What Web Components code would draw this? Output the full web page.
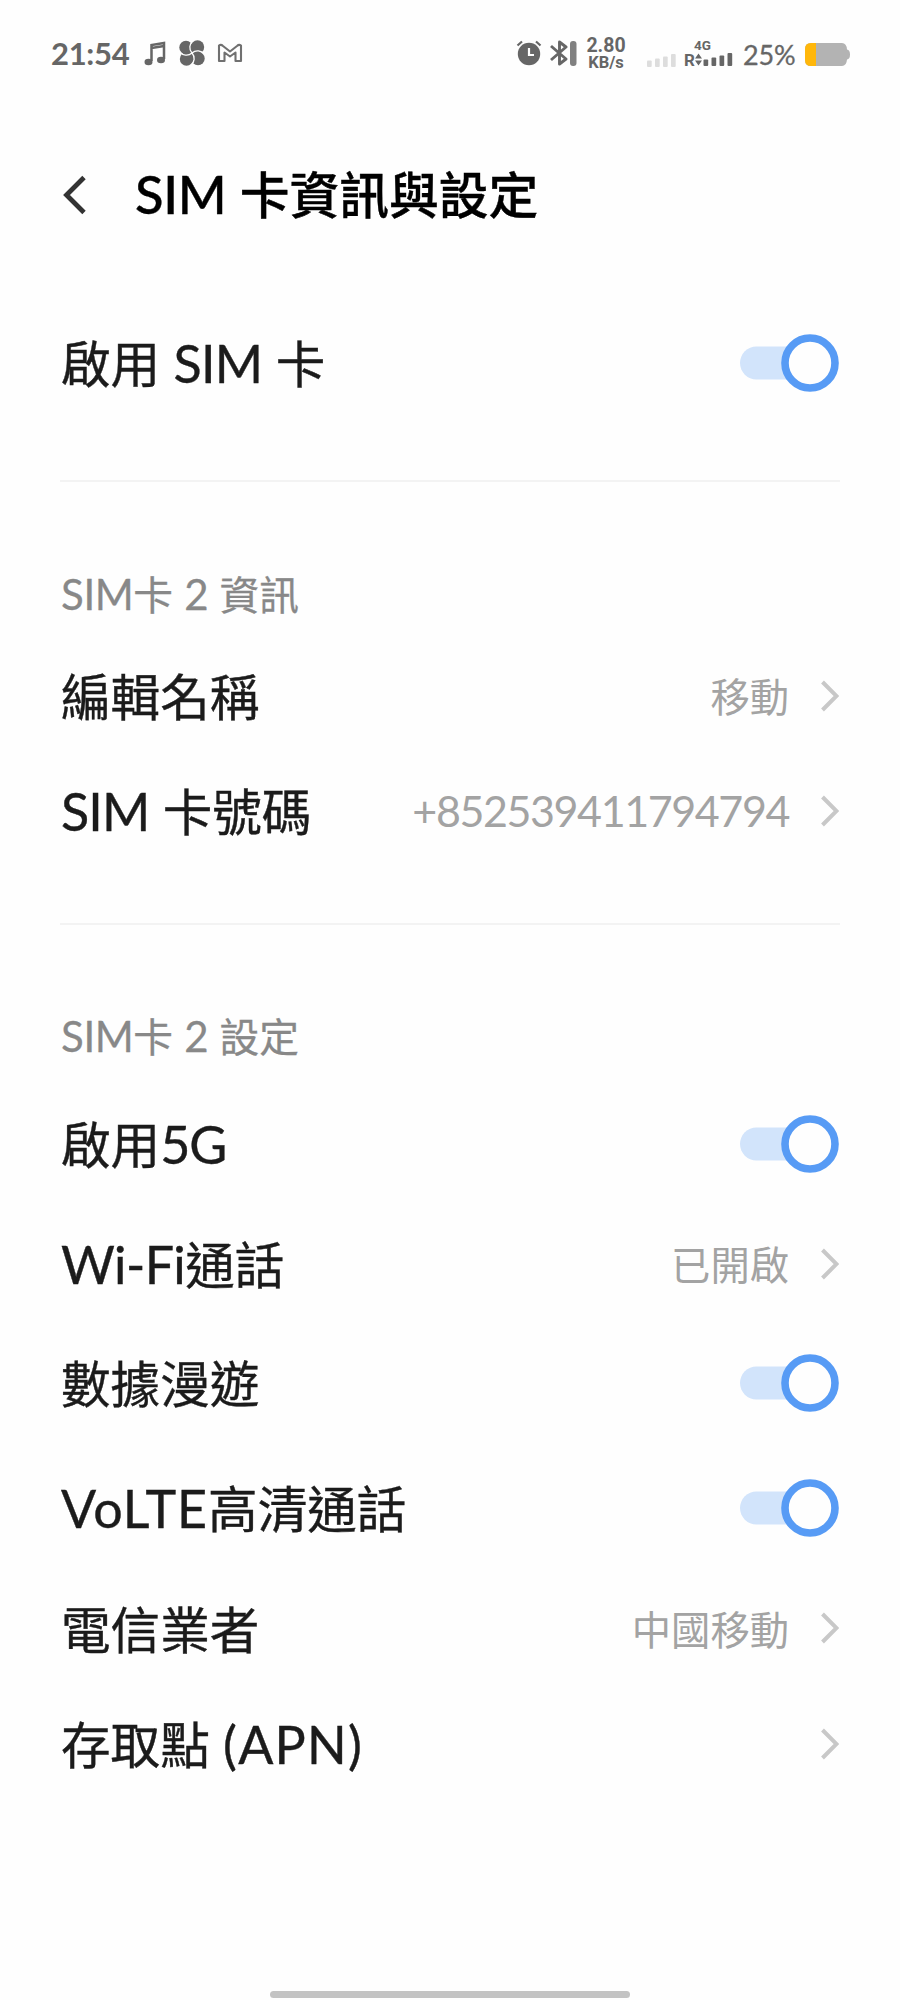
<!DOCTYPE html>
<html lang="zh-Hant"><head><meta charset="utf-8"><title>SIM</title>
<style>
html,body{margin:0;background:#fefefe}
</style></head><body>
<sim-screen></sim-screen>
<script>
const define=(name,html,init)=>customElements.define(name,class extends HTMLElement{
 constructor(){super();this.attachShadow({mode:'open'})}
 connectedCallback(){this.shadowRoot.innerHTML=html;if(init)init(this,this.shadowRoot)}
});
/* Splits Latin and CJK runs so that each script keeps its own size and spacing. */
define('mixed-text',`<style>:host{display:block;white-space:pre;line-height:1;padding-bottom:2px;word-spacing:var(--ws,2.200px);font-family:"Noto Sans CJK TC",sans-serif}
.l{font-family:Lato,"Noto Sans CJK TC",sans-serif;font-size:var(--latin,52px);letter-spacing:var(--ls,0);line-height:0}</style><span id="t"></span>`,(h,r)=>{
 const t=r.getElementById('t');
 for(const p of h.getAttribute('text').split(/([\x21-\x7e]+)/)){if(!p)continue;const s=document.createElement('span');s.textContent=p;if(/^[\x21-\x7e]/.test(p))s.className='l';t.append(s)}
});
define('status-bar',`<style>
:host{display:flex;align-items:center;height:106px;box-sizing:border-box;padding:0 50px 0 51px;color:#666;font-family:Lato,sans-serif}
svg{display:block;flex:none}
.time{font-size:31px;font-weight:700;letter-spacing:-.3px;width:93px;line-height:40px}
.sp{flex:1}
.rate{width:42px;margin:2px 20px 0 8px;text-align:center;white-space:nowrap;font:700 19.500px/16px Roboto,sans-serif}
.rate small{font-size:16.500px}
.net{display:flex;flex-direction:column;width:49px;margin-left:7px}
.g{font:700 13.500px/13px Roboto,sans-serif;padding-left:10px}
.row{display:flex;align-items:center;height:16px}
.r{font:700 17px/16px Roboto,sans-serif;width:12px}
.pct{font-size:27px;line-height:36px;-webkit-text-stroke:.3px;width:62px;margin:3px 0 0 10px;letter-spacing:-.2px}
</style>
<span class="time">21:54</span>
<svg width="22" height="25" viewBox="0 0 22 25"><path d="M7.500 20V4L20 2v16M7.500 7L20 5" fill="none" stroke="#666" stroke-width="2.500"/><ellipse cx="4.500" cy="21" rx="4" ry="3.200" fill="#666"/><ellipse cx="17" cy="19" rx="4" ry="3.200" fill="#666"/></svg>
<svg width="26" height="26" viewBox="0 0 26 26" style="margin-left:13px"><g fill="#666"><circle cx="18.500" cy="7" r="6.700"/><circle cx="19" cy="18.500" r="6.700"/><circle cx="7.500" cy="19" r="6.700"/><circle cx="7" cy="7.500" r="6.700"/><circle cx="13" cy="13" r="7"/></g><path d="M13 13C9.500 9 10.500 4 14 .500M13 13C17 9.500 22 10.500 25.500 14M13 13C16.500 17 15.500 22 12 25.500M13 13C9 16.500 4 15.500 .500 12" fill="none" stroke="#fefefe" stroke-width="1.300"/></svg>
<svg width="26" height="20" viewBox="0 0 26 20" style="margin-left:12px"><path d="M2 18V2.500Q4 1 6 3L13 8.500 20 3Q22 1 24 2.500V18H18.500V9.500L13 13.500 7.500 9.500V18Z" fill="none" stroke="#707070" stroke-width="2.100" stroke-linejoin="round"/></svg>
<span class="sp"></span>
<svg width="26" height="26" viewBox="0 0 26 26"><circle cx="13" cy="14" r="11.200" fill="#666"/><path d="M1.500 5.500L6 1.500M20 1.500L24.500 5.500" stroke="#666" stroke-width="2.200"/><path d="M13 8V15H18" fill="none" stroke="#fefefe" stroke-width="2.200"/></svg>
<svg width="28" height="26" viewBox="0 0 28 26" style="margin-left:7px"><path d="M2 6L17 19 10.500 24V2L17 7 2 20" fill="none" stroke="#666" stroke-width="2.900" stroke-linejoin="round"/><rect x="21" y="1" width="6.500" height="25" rx="3" fill="#808080"/></svg>
<div class="rate">2.80<br><small>KB/s</small></div>
<svg width="30" height="15" viewBox="0 0 30 15" style="margin-top:14px" fill="#ddd"><rect y="7.500" width="4.700" height="6.500" rx="1"/><rect x="8" y="5.500" width="4.700" height="8.500" rx="1"/><rect x="16" y="3.500" width="4.700" height="10.500" rx="1"/><rect x="24" y="1" width="4.700" height="13" rx="1"/></svg>
<div class="net"><span class="g">4G</span><div class="row"><span class="r">R</span><svg width="38" height="15" viewBox="0 0 38 15" fill="#666"><path d="M0 6.500L3.500 1.500 7 6.500ZM0 8.500L3.500 13.500 7 8.500Z"/><rect x="8.500" y="7.500" width="4.700" height="6.500" rx="1"/><rect x="16.500" y="5.500" width="4.700" height="8.500" rx="1"/><rect x="24.500" y="3.500" width="4.700" height="10.500" rx="1"/><rect x="32.500" y="1" width="4.700" height="13" rx="1"/></svg></div></div>
<span class="pct">25%</span>
<svg width="45" height="24" viewBox="0 0 45 24" style="margin-top:3px"><path d="M6 0H37Q41.500 0 42 6.500Q45 7 45 11.500Q45 16 42 16.500Q41.500 23 37 23H6Q0 23 0 17V6Q0 0 6 0Z" fill="#b3b3b3"/><path d="M6 0H11V23H6Q0 23 0 17V6Q0 0 6 0Z" fill="#ffb70b"/></svg>`);
define('page-title',`<style>:host{display:flex;align-items:center;height:180px;padding-left:62px}svg{width:25px;height:40px;flex:none;margin-bottom:2px}mixed-text{font-size:49.800px;font-weight:500;color:#000;margin-left:48px;padding-bottom:7px;--latin:52.500px;--ls:-.4px;-webkit-text-stroke:.4px}</style>
<svg viewBox="0 0 25 40"><path d="M22 2.500L4.500 20 22 37.500" fill="none" stroke="#333" stroke-width="4.800"/></svg><mixed-text text="SIM 卡資訊與設定"></mixed-text>`);
define('toggle-switch',`<style>:host{display:block;width:99px;height:58px}svg{display:block}</style><svg width="99" height="58" viewBox="0 0 99 58"><rect y="12.500" width="80" height="33" rx="16.500" fill="#d2e4fb"/><circle cx="70" cy="29" r="25" fill="#fefefe" stroke="#579bf5" stroke-width="7.600"/></svg>`);
define('chevron-right',`<style>:host{display:block;width:19px;height:32px}svg{display:block}</style><svg width="19" height="32" viewBox="0 0 19 32"><path d="M2.500 2L16.500 16 2.500 30" fill="none" stroke="#c8c8c8" stroke-width="4"/></svg>`);
define('setting-row',`<style>:host{display:flex;align-items:center;justify-content:space-between;padding:0 61px 0 61px;color:#1b1b1b;font-size:49.600px;-webkit-text-stroke:.4px}
.end{display:flex;align-items:center;gap:31px;font-size:39.300px;color:#a3a3a3;-webkit-text-stroke:0;--latin:43px}</style><slot></slot><div class="end"><slot name="end"></slot></div>`);
define('section-label',`<style>:host{display:flex;align-items:center;padding-left:61px;font-size:39.700px;color:#888;--latin:42px;--ls:-.4px;--ws:2.400px;-webkit-text-stroke:.3px}</style><slot></slot>`);
define('section-rule',`<style>:host{display:block;height:2px;margin:0 60px;background:#f3f3f3}</style>`);
const row=(h,t,v,ls=0)=>`<setting-row style="height:${h}px"><mixed-text text="${t}" style="--ls:${ls}px"></mixed-text>${v==='on'?'<toggle-switch slot="end"></toggle-switch>':(v?`<mixed-text slot="end" text="${v}" style="--ls:-1.400px"></mixed-text>`:'')+'<chevron-right slot="end"></chevron-right>'}</setting-row>`;
define('sim-screen',`<style>:host{display:flex;flex-direction:column;height:2000px;overflow:hidden;background:#fefefe}.bar{width:360px;height:7px;border-radius:4px;background:#c3c3c3;margin:auto auto 2px}</style>
<status-bar></status-bar><page-title></page-title>
${row(154,'啟用 SIM 卡','on',-.7)}
<section-rule style="margin-top:40px"></section-rule>
<section-label style="height:112px;margin-top:56px"><mixed-text text="SIM卡 2 資訊"></mixed-text></section-label>
${row(92,'編輯名稱','移動')}
${row(138,'SIM 卡號碼','+852539411794794',-.9)}
<section-rule style="margin-top:43px"></section-rule>
<section-label style="height:112px;margin-top:55px"><mixed-text text="SIM卡 2 設定"></mixed-text></section-label>
${row(103,'啟用5G','on',-1)}${row(138,'Wi-Fi通話','已開啟',-.6)}${row(100,'數據漫遊','on')}${row(150,'VoLTE高清通話','on',.9)}${row(91,'電信業者','中國移動')}${row(139,'存取點 (APN)','',1.2)}
<div class="bar"></div>`);
</script></body></html>
